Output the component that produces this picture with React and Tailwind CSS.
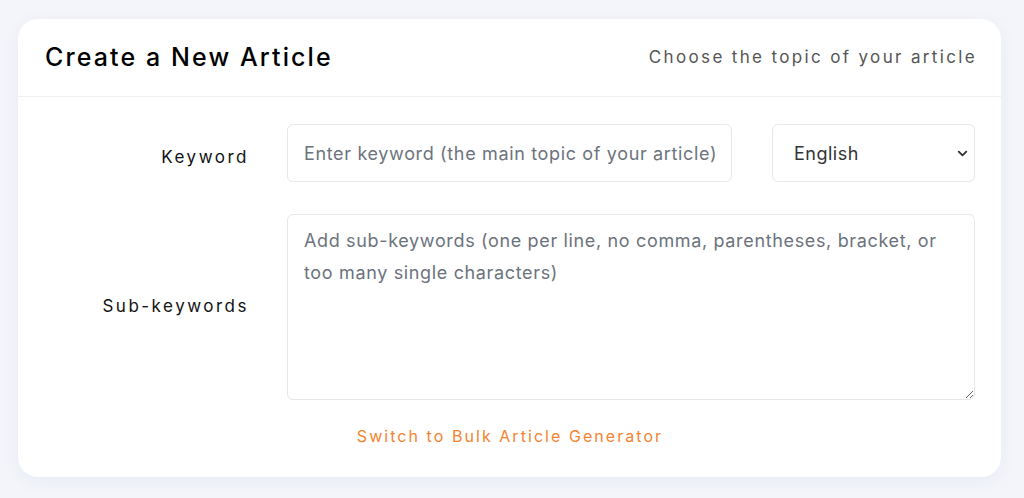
import { ChevronDown } from 'lucide-react';

export default function App() {
  return (
    <div className="min-h-[498px] bg-[#f3f5fa] px-[18px] pt-[19px] pb-[22px]" style={{ fontFamily: 'Inter, "Noto Sans", sans-serif' }}>
      <div className="bg-white rounded-[20px] shadow-[0_4px_18px_rgba(30,50,120,0.05)] w-[983px]">
        <div className="flex items-center justify-between h-[78px] pl-[27px] pr-[24px] border-b border-[#eeeff2]">
          <h1 className="text-[25px] font-medium text-black tracking-[2.1px]">Create a New Article</h1>
          <p className="text-[17px] text-[#555] tracking-[2.35px]">Choose the topic of your article</p>
        </div>

        <div className="pl-[27px] pr-[26px] pt-[27px] pb-[29px]">
          <div className="flex items-center">
            <label className="w-[204px] shrink-0 mt-[10px] text-right text-[17px] text-[#111] tracking-[2.5px]">Keyword</label>
            <div className="ml-[38px] flex gap-[40px]">
              <input
                type="text"
                placeholder="Enter keyword (the main topic of your article)"
                className="w-[445px] h-[58px] border border-[#e6e7ea] rounded-[6px] px-[16px] text-[18px] tracking-[0.65px] text-[#333] placeholder:text-[#6c737d] outline-none"
              />
              <div className="relative w-[203px] h-[58px] border border-[#e6e7ea] rounded-[6px] flex items-center px-[21px] text-[18px] tracking-[0.5px] text-[#333]">
                English
                <ChevronDown size={15} strokeWidth={3} className="absolute right-[4px] text-[#333]" />
              </div>
            </div>
          </div>

          <div className="flex items-center mt-[32px]">
            <label className="w-[204px] shrink-0 text-right text-[17px] text-[#111] tracking-[2.5px]">Sub-keywords</label>
            <textarea
              placeholder="Add sub-keywords (one per line, no comma, parentheses, bracket, or too many single characters)"
              className="ml-[38px] w-[688px] h-[186px] border border-[#e6e7ea] rounded-[6px] px-[16px] py-[10px] text-[18px] tracking-[0.65px] leading-[32px] text-[#333] placeholder:text-[#6c737d] outline-none"
            />
          </div>

          <div className="flex justify-center mt-[24px]">
            <a className="text-[16px] text-[#f5832f] tracking-[2.05px]" href="#">Switch to Bulk Article Generator</a>
          </div>
        </div>
      </div>
    </div>
  );
}
